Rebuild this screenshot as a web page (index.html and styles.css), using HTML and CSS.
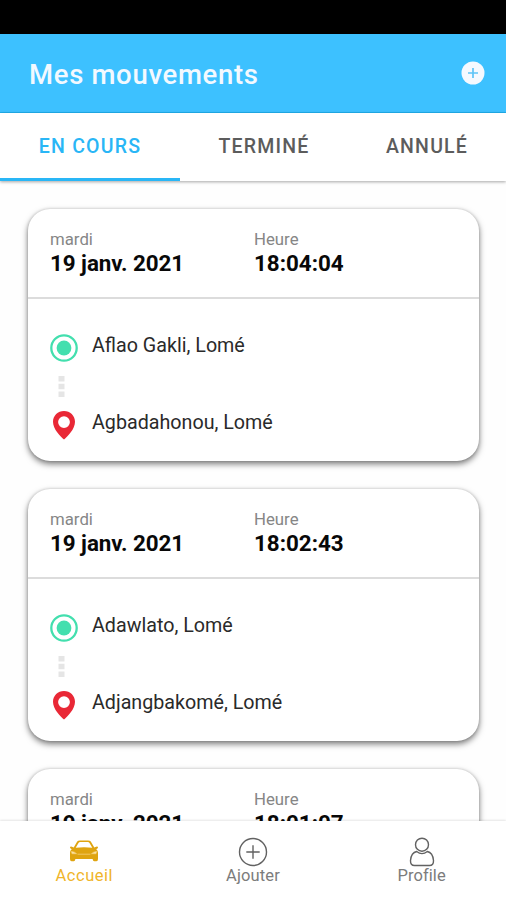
FILE: index.html
```html
<!DOCTYPE html>
<html lang="fr">
<head>
<meta charset="utf-8">
<title>Mes mouvements</title>
<link rel="stylesheet" href="styles.css">
</head>
<body>
<svg class="symbols" aria-hidden="true">
  <symbol id="origin" viewBox="0 0 28 28"><circle cx="14" cy="14" r="12.700" fill="none" stroke="#43dfae" stroke-width="2.300"/><circle cx="14" cy="14" r="7.400" fill="#43dfae"/></symbol>
  <symbol id="dots" viewBox="0 0 7 22"><path d="M0.500 0h6v5.500h-6zM0.500 7.700h6v5.500h-6zM0.500 15.400h6v5.500h-6z" fill="#e5e5e5"/></symbol>
  <symbol id="pin" viewBox="0 0 22 29"><path fill-rule="evenodd" d="M11 0C4.900 0 0 4.700 0 10.800C0 18.500 7.500 25.500 11 28.500C14.500 25.500 22 18.500 22 10.800C22 4.700 17.100 0 11 0zM11 5.200a5.900 5.900 0 1 1 0 11.800a5.900 5.900 0 1 1 0-11.800z" fill="#e92836"/></symbol>
</svg>
<div class="app">
  <div class="status"></div>
  <header class="topbar">
    <h1>Mes mouvements</h1>
    <svg class="add" viewBox="0 0 24 24"><circle cx="12" cy="12" r="11.500" fill="#f5f9ff"/><path d="M12 7v10M7 12h10" stroke="#5ec4f7" stroke-width="1.700"/></svg>
  </header>
  <nav class="tabs">
    <span class="tab active">EN COURS</span>
    <span class="tab done">TERMINÉ</span>
    <span class="tab cancelled">ANNULÉ</span>
  </nav>
  <main class="list">
    <article class="card">
      <div class="when">
        <div><p class="label">mardi</p><p class="value date">19 janv. 2021</p></div>
        <div><p class="label">Heure</p><p class="value">18:04:04</p></div>
      </div>
      <div class="route">
        <div class="stop"><svg class="origin"><use href="#origin"/></svg><span class="place from">Aflao Gakli, Lomé</span></div>
        <svg class="dots"><use href="#dots"/></svg>
        <div class="stop"><svg class="pin"><use href="#pin"/></svg><span class="place">Agbadahonou, Lomé</span></div>
      </div>
    </article>
    <article class="card">
      <div class="when">
        <div><p class="label">mardi</p><p class="value date">19 janv. 2021</p></div>
        <div><p class="label">Heure</p><p class="value">18:02:43</p></div>
      </div>
      <div class="route">
        <div class="stop"><svg class="origin"><use href="#origin"/></svg><span class="place from">Adawlato, Lomé</span></div>
        <svg class="dots"><use href="#dots"/></svg>
        <div class="stop"><svg class="pin"><use href="#pin"/></svg><span class="place">Adjangbakomé, Lomé</span></div>
      </div>
    </article>
    <article class="card">
      <div class="when">
        <div><p class="label">mardi</p><p class="value date">19 janv. 2021</p></div>
        <div><p class="label">Heure</p><p class="value">18:01:07</p></div>
      </div>
    </article>
  </main>
  <nav class="bottom">
    <div class="item current">
      <svg viewBox="0 0 30 30"><path fill-rule="evenodd" d="M8.200 4.500Q9 3.400 11 3.400h8q2 0 2.800 1.100l3.500 6.100l2.500-1q1.400 0 1.200 1.400l-1.700 1.300q1.700 1.300 1.700 3.400V22q0 2.200-1.600 2.200h-2.200q-1.200 0-1.600-2.200H6.400Q6 24.200 4.800 24.200H2.600Q1 24.200 1 22v-6.300q0-2.100 1.700-3.400L1 11q-.2-1.400 1.200-1.400l2.500 1zM9.500 5.900l-2.800 4.900q8.300-1.200 16.600 0l-2.800-4.900Q20 5.100 18.800 5.100h-7.600Q10 5.100 9.500 5.900z" fill="#dfa410"/><path d="M2.500 14.500q3 .2 5 2.200H3zM27.500 14.500q-3 .2-5 2.200h4.500zM8.500 17.200h13" fill="#ffe9b5" stroke="#f4d178" stroke-width=".8"/></svg>
      <span>Accueil</span>
    </div>
    <div class="item">
      <svg viewBox="0 0 30 30"><circle cx="15" cy="15" r="13.500"/><path d="M15 8.300v13.400M8.300 15h13.400"/></svg>
      <span>Ajouter</span>
    </div>
    <div class="item">
      <svg viewBox="0 0 30 30"><circle cx="15" cy="7.700" r="6.500"/><path d="M9.700 14.500C6 15.200 3.900 18.800 3.500 23.500Q3.300 28.500 7.500 28.500h15Q26.700 28.500 26.500 23.500C26.100 18.800 24 15.200 20.300 14.500Q15 18.700 9.700 14.500z"/></svg>
      <span class="profile">Profile</span>
    </div>
  </nav>
</div>
</body>
</html>
```
FILE: styles.css
```css
* { box-sizing: border-box; }
body { margin: 0; font-family: Roboto, sans-serif; background: #fff; }
h1, p { margin: 0; }
.symbols { display: none; }
.app { height: 900px; display: flex; flex-direction: column; overflow: hidden; background: #fefefe; }
.status { flex: 0 0 34px; background: #000; }
.topbar { flex: 0 0 79px; display: flex; align-items: center; justify-content: space-between; padding: 0 21px 0 29px; background: #3dc1ff; border-bottom: 1px solid #20b0ef; }
h1 { font-size: 27.500px; font-weight: 500; letter-spacing: .68px; line-height: 36px; color: #f3f9ff; white-space: nowrap; padding-top: 3px; }
.add { width: 24px; height: 24px; }
.tabs { flex: 0 0 68px; display: flex; background: #fff; box-shadow: 0 1px 3px rgba(0,0,0,.35); z-index: 1; }
.tab { padding-top: 22px; text-align: center; font-size: 19.500px; font-weight: 500; line-height: 24px; letter-spacing: 1.200px; color: #5c5c5c; white-space: nowrap; }
.active { flex: 0 0 180px; color: #29b6f6; border-bottom: 3px solid #29b6f6; }
.done { flex: 0 0 168px; }
.cancelled { flex: 0 0 158px; }
.list { flex: 1; min-height: 0; overflow: hidden; padding: 28px 27px 0 28px; display: flex; flex-direction: column; gap: 28px; }
.card { flex: 0 0 252px; background: #fff; border-radius: 22px; box-shadow: 0 3px 6px rgba(0,0,0,.52), 0 0 3px rgba(0,0,0,.16); }
.when { height: 90px; border-bottom: 2px solid #dcdcdc; display: grid; grid-template-columns: 204px 1fr; padding: 19px 22px 0; }
.label { font-size: 16.800px; line-height: 22px; color: #868686; font-weight: 400; }
.value { font-size: 22.400px; line-height: 26px; font-weight: 700; color: #080808; white-space: nowrap; }
.date { letter-spacing: -.05px; }
.route { padding: 34px 22px 0; display: flex; flex-direction: column; }
.stop { display: flex; align-items: flex-start; height: 29px; }
.origin { width: 28px; height: 28px; margin: 1px 14px 0 0; flex: none; }
.dots { width: 7px; height: 22px; margin: 14px 0 13px 8px; }
.pin { width: 22px; height: 29px; margin: 0 17px 0 3px; flex: none; }
.place { font-size: 19.700px; line-height: 24px; color: #2a2a2a; white-space: nowrap; }
.from { padding-top: 1px; }
.bottom { flex: 0 0 79px; display: grid; grid-template-columns: repeat(3, 1fr); background: #fff; z-index: 1; box-shadow: 0 -1px 2px rgba(0,0,0,.1); }
.item { display: flex; flex-direction: column; align-items: center; padding-top: 16px; color: #7c7c7c; font-size: 16.500px; line-height: 20px; letter-spacing: .15px; }
.item svg { width: 30px; height: 30px; fill: none; stroke: #626262; stroke-width: 1.400; }
.item.current svg { stroke: none; }
.item span { margin-top: -1px; }
.item.current { color: #f0b52b; letter-spacing: .5px; }
.profile { letter-spacing: .05px; }
```
